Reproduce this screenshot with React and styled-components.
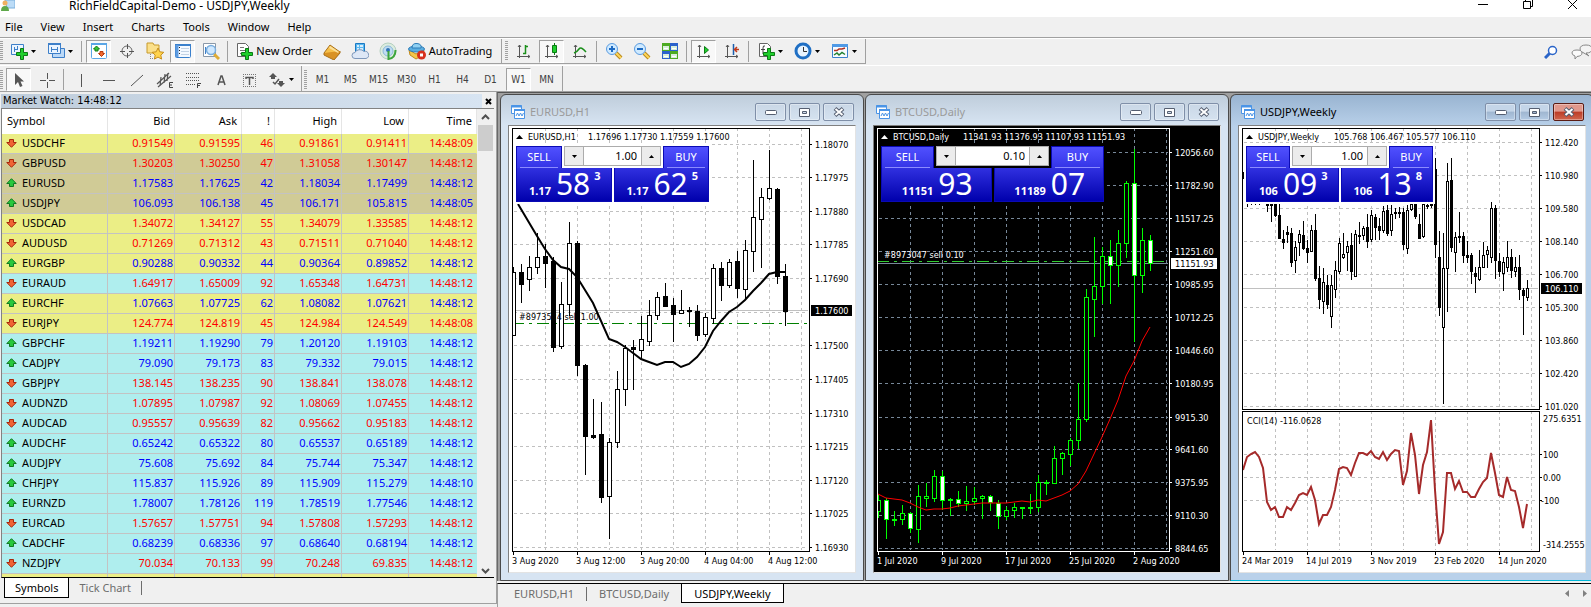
import React from "react";
import styled, { createGlobalStyle, css } from "styled-components";

const UI = '"Noto Sans", "Open Sans", sans-serif';
const CHART = '"DejaVu Sans Condensed", "DejaVu Sans", "Noto Sans", sans-serif';

const GlobalStyle = createGlobalStyle`
  * { box-sizing: border-box; }
  body { margin: 0; background: #f0f0f0; overflow: hidden; }
  button, input { font: inherit; color: inherit; margin: 0; padding: 0; border: 0; background: none; }
  svg { display: block; }
`;

const Shell = styled.div`
  display: flex;
  flex-direction: column;
  height: 100vh;
  background: #f0f0f0;
  color: #000;
  font: 11px/14px ${UI};
`;

/* ---------- title bar and menu ---------- */

const TitleBar = styled.header`
  display: flex;
  align-items: flex-start;
  height: 17px;
  padding-left: 1px;
  background: #fff;
  overflow: hidden;
  flex: none;
`;
const Title = styled.h1`
  flex: 1;
  margin: 0;
  padding-left: 54px;
  font: 12px/12px ${UI};
`;
const CaptionButton = styled.button`
  display: flex;
  justify-content: center;
  width: 45px;
  height: 12px;
  &:last-child { margin-right: -4px; }
`;
const MenuBar = styled.nav`
  display: flex;
  gap: 18px;
  height: 21px;
  padding: 0 5px;
  border-bottom: 1px solid #a0a0a0;
  flex: none;
`;
const MenuItem = styled.button`
  line-height: 20px;
  text-align: left;
`;

/* ---------- toolbars ---------- */

const Toolbar = styled.div`
  display: flex;
  align-items: stretch;
  height: ${(p) => (p.$last ? 26 : 27)}px;
  border-top: 1px solid #fff;
  border-bottom: ${(p) => (p.$last ? 0 : 1)}px solid transparent;
  flex: none;
`;
const ToolGroup = styled.div`
  display: flex;
  align-items: center;
  gap: 3px;
  padding-top: ${(p) => (p.$tight ? 2 : 0)}px;
  padding-right: ${(p) => (p.$tight ? 3 : 4)}px;
  border-right: 1px solid #a0a0a0;
  border-bottom: ${(p) => (p.$tight ? 0 : 1)}px solid #a0a0a0;
`;
const Grip = styled.span`
  width: 3px;
  height: 20px;
  margin-left: ${(p) => (p.$m === undefined ? 3 : p.$m)}px;
  background: repeating-linear-gradient(#a0a0a0 0 1px, #f0f0f0 1px 2px);
`;
const ToolButton = styled.button`
  display: flex;
  align-items: center;
  justify-content: center;
  gap: 3px;
  width: ${(p) => p.$w || 25}px;
  height: 23px;
  white-space: nowrap;
  border: 1px solid transparent;
  ${(p) =>
    p.$on &&
    css`
      background: #f8f8f8;
      border-color: #a0a0a0 #fff #fff #a0a0a0;
    `}
  ${(p) =>
    p.$small &&
    css`
      font: 10px/12px ${CHART};
      color: #404040;
    `}
`;
const ToolSeparator = styled.span`
  width: 1px;
  height: 21px;
  margin: 0 1px;
  background: #a0a0a0;
`;
const ToolbarEnd = styled.div`
  flex: 1;
  display: flex;
  justify-content: flex-end;
  align-items: center;
  gap: 13px;
  overflow: hidden;
`;

/* ---------- market watch ---------- */

const Main = styled.main`
  display: flex;
  flex: 1;
  min-height: 0;
  border-top: 1px solid #a0a0a0;
`;
const WatchPanel = styled.section`
  display: flex;
  flex-direction: column;
  width: 497px;
  margin-bottom: 3px;
  padding: 2px 2px 0 1px;
  border-right: 1px solid #a0a0a0;
  border-bottom: 1px solid #a0a0a0;
  flex: none;
`;
const WatchTitle = styled.div`
  display: flex;
  align-items: center;
  height: 14px;
  flex: none;
`;
const WatchName = styled.h2`
  flex: 1;
  margin: 0;
  padding-left: 2px;
  font: 11px/14px ${CHART};
  background: linear-gradient(90deg, #bfcddb, #d7e4f2);
`;
const CloseButton = styled.button`
  display: flex;
  justify-content: center;
  width: 12px;
`;
const WatchBody = styled.div`
  display: flex;
  flex: 1;
  min-height: 0;
  border: 1px solid #828282;
  border-right: 0;
  border-bottom-color: #000;
`;
const TableClip = styled.div`
  flex: 1;
  overflow: hidden;
  background: #fff;
`;
const Table = styled.table`
  width: 100%;
  table-layout: fixed;
  border-collapse: separate;
  border-spacing: 0;
`;
const HeadCell = styled.th`
  width: ${(p) => p.$w}px;
  height: 25px;
  padding: 0 4px 2px 5px;
  font-weight: 400;
  text-align: ${(p) => (p.$left ? "left" : "right")};
  border-right: 1px solid #e5e5e5;
`;
const Row = styled.tr`
  background: ${(p) => ({ y: "#ebee86", k: "#d0cb96", c: "#afeeee" })[p.$tone]};
  color: ${(p) => (p.$up ? "#0000ff" : "#ff0000")};
`;
const Cell = styled.td`
  height: 20px;
  padding: 0 1px 2px;
  text-align: right;
  line-height: 17px;
  border-right: 1px solid #c3c3c3;
  border-bottom: 1px solid #c3c3c3;
  &:last-child { padding-right: 3px; border-right-color: transparent; }
`;
const SymbolCell = styled(Cell)`
  text-align: left;
  color: #000;
`;
const SymbolName = styled.span`
  display: flex;
  align-items: center;
  gap: 5px;
  padding-left: 3px;
`;
const ScrollBar = styled.div`
  display: flex;
  flex-direction: column;
  align-items: center;
  width: 17px;
  padding: 5px 0 3px;
  background: #f0f0f0;
`;
const ScrollThumb = styled.div`
  width: 15px;
  height: 26px;
  margin: 5px 0 auto;
  background: #cdcdcd;
`;

/* ---------- tab strips ---------- */

const TabStrip = styled.div`
  display: flex;
  align-items: flex-start;
  height: ${(p) => p.$h}px;
  padding-left: ${(p) => p.$pad}px;
  flex: none;
`;
const DocumentTabs = styled(TabStrip)`
  margin-top: 2px;
  border-top: 1px solid #000;
  border-left: 1px solid #a0a0a0;
`;
const Tab = styled.button`
  height: ${(p) => p.$h}px;
  padding: 0 ${(p) => p.$px || 10}px;
  line-height: 17px;
  color: #6d6d6d;
  ${(p) =>
    p.$on &&
    css`
      color: #000;
      background: #fff;
      border: 1px solid #000;
      border-top: 0;
    `}
`;
const TabDivider = styled.span`
  width: 1px;
  height: 14px;
  margin-top: 3px;
  background: #6d6d6d;
`;
const TabArrows = styled.div`
  display: flex;
  gap: 14px;
  margin: 6px 4px 0 auto;
`;

/* ---------- chart windows ---------- */

const Workspace = styled.section`
  display: flex;
  flex-direction: column;
  flex: 1;
  min-width: 0;
`;
const Desktop = styled.div`
  display: flex;
  flex: 1;
  min-height: 0;
  overflow: hidden;
  padding: 1px 0 0 2px;
  background: #a0a0a0;
  border-top: 1px solid #555;
  border-left: 1px solid #696969;
`;
const WindowRow = styled.div`
  display: grid;
  grid-template-columns: repeat(3, minmax(0, 1fr));
  gap: 1px;
  flex: 1;
  margin-right: -3px;
`;
const Window = styled.article`
  display: flex;
  flex-direction: column;
  min-height: 0;
  padding: 0 7px 7px;
  border: 1px solid #4a4a4a;
  border-bottom-color: ${(p) => (p.$active ? "#00b8d8" : "#4a4a4a")};
  border-radius: 6px 6px 0 0;
  background: ${(p) =>
    p.$active
      ? "linear-gradient(#99b4d1 0, #b9d1ea 32px)"
      : "linear-gradient(#bfcddb 0, #d7e4f2 30px)"};
`;
const WindowTitle = styled.div`
  display: flex;
  align-items: center;
  gap: 3px;
  height: 30px;
  padding: 4px 2px 0 3px;
  flex: none;
`;
const WindowName = styled.h2`
  flex: 1;
  margin: 0 0 0 1px;
  font: 11px/16px ${UI};
  color: ${(p) => (p.$active ? "#000" : "#9a9a9a")};
`;
const WindowButton = styled.button`
  display: flex;
  align-items: center;
  justify-content: center;
  width: 31px;
  height: 18px;
  border: 1px solid ${(p) => (p.$close ? "#5a1c14" : "#7f8fa8")};
  border-radius: 2px;
  box-shadow: inset 0 0 0 1px rgba(255, 255, 255, 0.35);
  background: ${(p) =>
    p.$close ? "linear-gradient(#e0988c 0 45%, #bc3c26 50%, #d0664e)" : p.$active ? "linear-gradient(#c4d5e8 0 45%, #9fb6d0 50%, #b4cbe4)" : "linear-gradient(#c9d7e6, #d5e2f0)"};
`;
const ChartBody = styled.div`
  display: flex;
  flex-direction: column;
  flex: 1;
  min-height: 0;
  padding: 2px 0 0 3px;
  border: 1px solid #808080;
  border-right-color: #e3e3e3;
  border-bottom-color: #e3e3e3;
  background: ${(p) => p.$bg};
  color: ${(p) => p.$fg};
`;
const Pane = styled.div`
  display: flex;
  ${(p) => (p.$h ? `height: ${p.$h}px; flex: none; margin-top: 1px;` : "flex: 1; min-height: 0;")}
`;
const Plot = styled.div`
  position: relative;
  flex: 1;
  min-width: 0;
  border: 1px solid currentColor;
  overflow: hidden;
`;
const PlotSvg = styled.svg`
  width: 100%;
  height: 100%;
  text { font: 9px ${CHART}; }
`;
const AxisSvg = styled.svg`
  width: ${(p) => p.$w}px;
  height: 100%;
  flex: none;
  overflow: visible;
  text { font: 9px ${CHART}; }
`;
const TimeAxis = styled.div`
  display: flex;
  height: 20px;
  flex: none;
`;
const TimeLabel = styled.span`
  width: 64px;
  padding-top: 3px;
  font: 9px/12px ${CHART};
  white-space: nowrap;
  flex: none;
  background: linear-gradient(currentColor, currentColor) 1px 0 / 1px 3px no-repeat;
`;

/* ---------- one-click trading ---------- */

const TradePanel = styled.div`
  position: absolute;
  left: 3px;
  top: 17px;
  display: grid;
  grid-template-columns: 1fr 1fr;
  gap: 2px;
  width: ${(p) => p.$w}px;
  height: 56px;
  background: ${(p) => p.$bg};
  outline: 2px solid ${(p) => p.$bg};
`;
const QuoteButton = styled.button`
  display: flex;
  flex-direction: column;
  align-items: ${(p) => (p.$buy ? "flex-end" : "flex-start")};
  color: #fff;
`;
const QuoteTab = styled.span`
  width: ${(p) => p.$w}px;
  height: 22px;
  padding: 0 3px;
  line-height: 20px;
  text-align: center;
  border: 1px solid #0a0ab4;
  border-bottom: 0;
  background: linear-gradient(#5050ff, #3434e6);
  &::after {
    content: "";
    display: block;
    height: 1px;
    background: #8c8cff;
  }
`;
const QuotePrice = styled.span`
  display: flex;
  justify-content: center;
  width: 100%;
  height: 34px;
  border: 1px solid #0a0ab4;
  border-top-width: 0;
  background: linear-gradient(#3030e0, #0000ac);
`;
const Prefix = styled.b`
  padding: 15px 5px 0 2px;
  font-size: 11px;
  line-height: 16px;
`;
const Pips = styled.span`
  font-size: 30px;
  line-height: 32px;
`;
const Fraction = styled.b`
  padding: 2px 0 0 4px;
  font-size: 11px;
  line-height: 12px;
`;
const Spinner = styled.div`
  position: absolute;
  top: 0;
  left: ${(p) => p.$x}px;
  right: ${(p) => p.$x}px;
  display: flex;
  height: 20px;
  border: 1px solid #acacac;
  background: #fff;
  color: #000;
`;
const SpinButton = styled.button`
  display: flex;
  align-items: center;
  justify-content: center;
  width: 19px;
  background: #ececec;
  border: 0 solid #acacac;
  border-right-width: ${(p) => (p.$down ? 1 : 0)}px;
  border-left-width: ${(p) => (p.$down ? 0 : 1)}px;
`;
const Volume = styled.input`
  flex: 1;
  width: 0;
  padding-right: 4px;
  text-align: right;
`;

/* ---------- icons ---------- */

const Svg = ({ s = 18, children }) => (
  <svg width={s} height={s} viewBox="0 0 18 18" fill="none" aria-hidden="true">
    {children}
  </svg>
);
const Plus = () => (
  <path d="M10.500 6.500h3v4h4v3h-4v4h-3v-4h-4v-3h4z" fill="#1fcf2c" stroke="#0b7a14" />
);
const Caret = () => (
  <svg width="5" height="3" viewBox="0 0 5 3" aria-hidden="true">
    <path d="M0 0h5L2.500 3z" fill="#000" />
  </svg>
);
const Axes = ({ children }) => (
  <Svg>
    <path d="M4.500 3v13M2 14.500h13M3 5l1.500-2L6 5M13 13l2 1.500L13 16" stroke="#555" />
    {children}
  </Svg>
);
const Lens = ({ children }) => (
  <Svg>
    <path d="M11 11l5 5" stroke="#b98a1e" strokeWidth="4" />
    <path d="M11 11l5 5" stroke="#ffd65a" strokeWidth="2" />
    <circle cx="7" cy="7" r="5.500" fill="#cfeaff" stroke="#5a9be0" />
    <path d={children} stroke="#1d6bc4" strokeWidth="2" />
  </Svg>
);

const I = {
  newChart: (
    <Svg>
      <path d="M1.500 2.500h12v10h-12z" fill="#eaf4ff" stroke="#3d7fc9" />
      <path d="M4.500 5v5M7.500 4v4M4 7.500h3" stroke="#3d7fc9" />
      <Plus />
    </Svg>
  ),
  profiles: (
    <Svg>
      <path d="M5.500 6.500h12v9h-12z" fill="#bcd9f7" stroke="#3d7fc9" />
      <path d="M1.500 1.500h12v10h-12z" fill="#eaf4ff" stroke="#3d7fc9" />
      <path d="M1 2h13" stroke="#3d7fc9" strokeWidth="2" />
      <path d="M4 7.500h7M4.500 5v5M10.500 5v5" stroke="#3d7fc9" />
    </Svg>
  ),
  watch: (
    <Svg>
      <rect x="1.500" y="1.500" width="15" height="15" rx="1" fill="#fff" stroke="#5aa6e6" />
      <path d="M1 2h16" stroke="#5aa6e6" strokeWidth="2" />
      <path d="M6.500 4l3 3H8v2H5V7H3.500z" fill="#35c435" stroke="#157a15" />
      <path d="M11.500 14.500l-3-3H10v-2h3v2h1.500z" fill="#f06a30" stroke="#b8380c" />
    </Svg>
  ),
  data: (
    <Svg>
      <circle cx="9" cy="9" r="5" stroke="#666" />
      <path d="M9.500 2v5M9.500 11v5M2 9.500h5M11 9.500h5" stroke="#555" />
    </Svg>
  ),
  navigator: (
    <Svg>
      <path d="M1 1h6l1 2h5v8H1z" fill="#fbe08a" stroke="#c79a2c" />
      <path d="M4.500 12v5M4 16.500h5" stroke="#888" strokeDasharray="1 1" />
      <path d="M12 6l1.800 3.800 4 .5-3 2.800.8 4-3.600-2-3.600 2 .8-4-3-2.800 4-.5z" fill="#ffd34d" stroke="#c78f1c" />
    </Svg>
  ),
  terminal: (
    <Svg>
      <rect x="1.500" y="2.500" width="15" height="13" rx="1" fill="#f4f9ff" stroke="#3a80cc" />
      <path d="M1 3h16" stroke="#3a80cc" strokeWidth="2" />
      <path d="M3 3v12" stroke="#5d9be0" strokeWidth="3" />
      <path d="M7 6.500h8M7 9.500h8M7 12.500h8" stroke="#c2d2e4" />
      <path d="M5.500 5v9" stroke="#222" strokeDasharray="1 2" />
    </Svg>
  ),
  tester: (
    <Svg>
      <path d="M1.500 1.500h12v13h-12z" fill="#fff" stroke="#8a98a8" />
      <path d="M3.500 12V5M11.500 4v3" stroke="#3d7fc9" />
      <path d="M12 12l5 5" stroke="#e0ac35" strokeWidth="3" />
      <circle cx="9" cy="8" r="4.500" fill="#cfe8ff" stroke="#7aaede" strokeWidth="1.500" />
    </Svg>
  ),
  order: (
    <Svg>
      <path d="M2.500 1.500h8l3 3v10h-11z" fill="#fff" stroke="#666" />
      <path d="M5 5.500h4M5 8.500h5M5 11.500h3" stroke="#777" />
      <Plus />
    </Svg>
  ),
  book: (
    <Svg>
      <path d="M1 11l6-8 10 7-5 6z" fill="#f6c04a" stroke="#a8701a" />
      <path d="M1 11v2l10 5 6-7v-2" fill="#d99224" stroke="#a8701a" />
      <path d="M7 4l9 6-1 1-9-5z" fill="#fbe09a" />
    </Svg>
  ),
  cloud: (
    <Svg>
      <path d="M4.500 1.500h9v9h-9z" fill="#5cb8f0" stroke="#1a7ac4" />
      <path d="M6 4h2M6 7h2M9 4h3M9 7h3" stroke="#fff" strokeWidth="1.500" />
      <path d="M4 16.500a3 3 0 010-6 5 4 0 019-1 3.500 3.500 0 012 7z" fill="#dde7f6" stroke="#7e97ba" />
    </Svg>
  ),
  signal: (
    <Svg>
      <circle cx="9" cy="9" r="8" fill="#dcecdf" stroke="#b4d0c0" />
      <circle cx="9" cy="9" r="5" fill="#c0dcf2" stroke="#8ab8d8" />
      <circle cx="9" cy="8" r="2" fill="#2f74b8" />
      <path d="M9.500 9v8q7-1 7-9" stroke="#3da53d" strokeWidth="2" />
    </Svg>
  ),
  auto: (
    <Svg>
      <path d="M1 8l7 4 8-4-1 5-7 4-6-4z" fill="#f5c64a" stroke="#c28a1a" />
      <ellipse cx="8.500" cy="7" rx="8" ry="3" fill="#5aaee0" stroke="#2d7cb8" />
      <path d="M4 6q0-5 5-4.500T13 6z" fill="#8fd0f2" stroke="#2d7cb8" />
      <circle cx="13.500" cy="13" r="4.500" fill="#d8301c" />
      <path d="M12 11.500h3v3h-3z" fill="#fff" />
    </Svg>
  ),
  bars: (
    <Axes>
      <path d="M10.500 3v9M10 4.500h3M8 11.500h3" stroke="#1a8f1a" strokeWidth="1.500" />
    </Axes>
  ),
  candles: (
    <Axes>
      <path d="M11.500 1v12" stroke="#0b7a14" />
      <path d="M9.500 3.500h4v7h-4z" fill="#1fcf2c" stroke="#0b7a14" />
    </Axes>
  ),
  line: (
    <Axes>
      <path d="M3 11q3-1 5-4t7 3" stroke="#1a8f1a" strokeWidth="1.500" />
    </Axes>
  ),
  zoomIn: <Lens>M4 7h6M7 4v6</Lens>,
  zoomOut: <Lens>M4 7h6</Lens>,
  tile: (
    <Svg>
      <path d="M1 1h8v8H1zM9 9h8v8H9z" fill="#4cab22" />
      <path d="M9 1h8v8H9zM1 9h8v8H1z" fill="#2a62cc" />
      <path d="M2 4h6v4H2zM10 4h6v4h-6zM2 12h6v4H2zM10 12h6v4h-6z" fill="#d8efdc" />
      <path d="M3 6.500h4M11 6.500h4M3 14.500h4M11 14.500h4" stroke="#fff" />
    </Svg>
  ),
  scroll: (
    <Axes>
      <path d="M9.500 4.500v7l4-3.500z" fill="#1fcf2c" stroke="#0b7a14" />
    </Axes>
  ),
  shift: (
    <Axes>
      <path d="M10.500 2v11" stroke="#1b5fae" strokeWidth="1.500" />
      <path d="M16 7.500h-4M14 5l-2.500 2.500L14 10" stroke="#c0391b" strokeWidth="1.500" />
    </Axes>
  ),
  indicator: (
    <Svg>
      <path d="M2.500 1.500h8l3 3v10h-11z" fill="#fff" stroke="#666" />
      <path d="M8 4q-2-1-2 2v6M4 7.500h4" stroke="#444" />
      <Plus />
    </Svg>
  ),
  clock: (
    <Svg>
      <circle cx="9" cy="9" r="7" fill="#e8f4ff" stroke="#1f6fc4" strokeWidth="3" />
      <path d="M9.500 5v4.500h3.500" stroke="#333" />
    </Svg>
  ),
  template: (
    <Svg>
      <path d="M1.500 2.500h15v13h-15z" fill="#f7fbff" stroke="#3a80cc" />
      <path d="M1 3.500h16" stroke="#4f9ae6" strokeWidth="3" />
      <path d="M3 8.500h3l2-1.500h3l3-1" stroke="#b03020" strokeWidth="1.500" />
      <path d="M3 13l3-2 2 2 3-2.500 3 2" stroke="#208030" strokeWidth="1.500" />
    </Svg>
  ),
  cursor: (
    <Svg>
      <path d="M5 2v12l3-3 2 5 2.500-1-2-4.500H14z" fill="#555" />
    </Svg>
  ),
  cross: (
    <Svg>
      <path d="M9.500 2v6M9.500 11v6M2 9.500h6M11 9.500h6" stroke="#555" />
    </Svg>
  ),
  vline: (
    <Svg>
      <path d="M9.500 3v13" stroke="#555" />
    </Svg>
  ),
  hline: (
    <Svg>
      <path d="M3 9.500h12" stroke="#555" />
    </Svg>
  ),
  trend: (
    <Svg>
      <path d="M3 15L15 4" stroke="#555" />
    </Svg>
  ),
  channel: (
    <Svg>
      <path d="M1 13L13 2M2 16L15 5M5 6l-1 9M9 3L8 12M12 2l-1 8" stroke="#555" strokeWidth="1.200" />
      <path d="M17 11.500h-3.500v5H17M13.500 14H16" stroke="#444" />
    </Svg>
  ),
  fibo: (
    <Svg>
      <path d="M2 2.500h14M2 6.500h14M2 9.500h14M2 13.500h9" stroke="#555" strokeDasharray="1 1" />
      <path d="M17 12.500h-3.500V17M13.500 14.500H16" stroke="#444" />
    </Svg>
  ),
  text: (
    <Svg>
      <path d="M6 14l3-9h1l3 9M7 11h5" stroke="#555" strokeWidth="1.500" />
    </Svg>
  ),
  label: (
    <Svg>
      <path d="M3 3.500h13M3 15.500h13M3.500 3v13M15.500 3v13" stroke="#777" strokeDasharray="1 1" />
      <path d="M6 8V6.500h7V8M9.500 6v8" stroke="#555" strokeWidth="1.500" />
    </Svg>
  ),
  arrows: (
    <Svg>
      <path d="M5 2l4 4H7v2H3V6H1zM13 16l-4-4h2v-2h4v2h2z" fill="#555" />
      <path d="M5 11l2 2 4-5" stroke="#555" strokeWidth="1.500" />
    </Svg>
  ),
  chartWin: (
    <svg width="15" height="14" viewBox="0 0 15 14" fill="none" aria-hidden="true">
      <path d="M.5.5h10v8H.5z" fill="#fff" stroke="#4a94e6" />
      <path d="M0 1.500h11" stroke="#4a94e6" strokeWidth="2" />
      <path d="M3.500 4.500h10v9h-10z" fill="#fff" stroke="#4a94e6" />
      <path d="M3 5h11" stroke="#4a94e6" strokeWidth="2" />
      <path d="M5 11l1.500-3L8 11l1.500-3 1.500 3 1.500-3" stroke="#4a94e6" />
    </svg>
  ),
};

const Arrow = ({ up }) => (
  <svg width="11" height="10" viewBox="0 0 11 10" aria-hidden="true">
    <path
      d="M5.500.7l4.700 4.800H7.500v3h-4v-3H.8z"
      transform={up ? undefined : "rotate(180 5.500 5)"}
      fill={up ? "#27c83c" : "#f06434"}
      stroke={up ? "#107a20" : "#a8280c"}
    />
  </svg>
);
const Chevron = ({ down }) => (
  <svg width="9" height="6" viewBox="0 0 9 6" fill="none" aria-hidden="true">
    <path d={down ? "M1 1l3.500 3.500L8 1" : "M1 5l3.500-3.500L8 5"} stroke="#505050" strokeWidth="2" />
  </svg>
);

/* ---------- data ---------- */

const quotes = `USDCHF 0.91549 0.91595 46 0.91861 0.91411 09 d y
GBPUSD 1.30203 1.30250 47 1.31058 1.30147 12 d k
EURUSD 1.17583 1.17625 42 1.18034 1.17499 12 u k
USDJPY 106.093 106.138 45 106.171 105.815 05 u k
USDCAD 1.34072 1.34127 55 1.34079 1.33585 12 d y
AUDUSD 0.71269 0.71312 43 0.71511 0.71040 12 d y
EURGBP 0.90288 0.90332 44 0.90364 0.89852 12 u y
EURAUD 1.64917 1.65009 92 1.65348 1.64731 12 d c
EURCHF 1.07663 1.07725 62 1.08082 1.07621 12 u y
EURJPY 124.774 124.819 45 124.984 124.549 08 d y
GBPCHF 1.19211 1.19290 79 1.20120 1.19103 12 u c
CADJPY 79.090 79.173 83 79.332 79.015 12 u c
GBPJPY 138.145 138.235 90 138.841 138.078 12 d c
AUDNZD 1.07895 1.07987 92 1.08069 1.07455 12 d c
AUDCAD 0.95557 0.95639 82 0.95662 0.95183 12 d c
AUDCHF 0.65242 0.65322 80 0.65537 0.65189 12 u c
AUDJPY 75.608 75.692 84 75.744 75.347 12 u c
CHFJPY 115.837 115.926 89 115.909 115.279 10 u c
EURNZD 1.78007 1.78126 119 1.78519 1.77546 12 u c
EURCAD 1.57657 1.57751 94 1.57808 1.57293 12 d c
CADCHF 0.68239 0.68336 97 0.68640 0.68194 12 u c
NZDJPY 70.034 70.133 99 70.248 69.835 12 d c`
  .split("\n")
  .map((l) => l.split(" "));

/* candles: wick top, body top, body bottom, wick bottom, falling */
const parse = (s) => s.trim().split(/\s+/).map((c) => c.split(",").map(Number));

const eur = parse(`139,144,207,207,0 136,144,156,174,1 128,139,151,162,0 105,129,139,145,0 116,128,135,159,1
129,133,219,223,1 154,176,218,220,0 94,115,176,187,0 113,115,237,247,1 236,237,308,346,1 271,307,309,310,1
274,306,369,374,1 310,314,368,410,0 243,261,314,319,0 217,220,261,277,0 212,219,221,261,1 188,211,222,230,0
172,187,213,217,0 164,169,187,191,0 155,168,178,178,1 170,177,186,213,1 162,182,185,185,0 179,182,183,198,1
177,183,207,212,1 185,189,206,208,0 136,140,190,195,0 134,140,157,172,1 131,134,157,159,0 123,133,160,169,1
112,122,161,171,0 32,89,123,143,0 60,69,91,139,0 22,60,70,71,0 60,61,148,155,1 136,148,183,197,1`);

const btc = parse(`367,372,383,389,0 370,372,391,410,1 383,391,392,397,0 377,385,391,396,0 384,385,400,404,1
357,368,401,414,0 355,368,370,378,0 342,348,370,373,0 343,348,372,381,1 370,371,372,387,0 363,371,375,378,1
358,373,375,382,0 359,370,373,376,0 367,368,370,390,0 367,368,374,382,1 372,375,388,400,1 379,382,388,391,0
375,379,382,389,0 379,379,380,390,0 366,379,380,385,0 347,354,379,383,0 352,354,355,366,0 318,330,355,355,0
324,325,330,346,0 310,312,326,337,0 255,291,312,320,0 161,169,291,293,0 109,158,171,208,0 119,128,158,175,0
112,128,137,175,1 102,115,137,158,0 53,55,115,129,0 21,55,147,213,1 100,112,147,164,0 107,112,135,142,1`);

const jpy = parse(`44,48,50,50,1 60,62,75,78,1 60,62,75,76,1 60,62,75,76,1 60,62,75,76,1 60,62,70,72,1 75,76,77,83,1
75,76,77,93,0 75,76,87,88,1 75,87,110,110,1 102,111,114,120,1 98,104,106,114,1 100,105,134,138,1 113,119,132,144,0
102,106,114,127,0 93,107,120,121,1 112,120,124,134,1 97,102,123,123,0 86,102,150,152,1 138,150,171,180,1
140,154,173,185,0 147,157,176,180,1 147,157,188,199,0 133,142,161,169,0 110,115,143,145,0 105,126,129,130,0
113,118,124,142,0 105,117,143,151,1 102,106,148,148,0 94,107,108,115,1 98,100,107,111,0 86,99,113,119,1
82,87,111,113,0 86,89,99,111,1 90,98,102,111,1 78,83,102,104,0 77,82,105,107,1 77,86,102,107,0 80,84,85,90,0
79,84,85,89,1 80,84,116,121,1 77,82,120,125,0 75,76,81,82,0 75,76,88,90,1 86,96,110,110,1 75,76,108,109,0
75,77,78,80,1 75,76,77,79,1 30,41,116,129,1 103,129,179,187,1 105,140,199,275,0 35,53,140,183,0 30,52,119,123,1
104,109,124,143,0 84,108,109,114,1 104,108,127,134,1 113,127,129,134,1 125,127,143,155,1 139,145,148,164,1
122,139,151,152,0 114,127,139,139,0 118,122,126,139,0 74,80,129,134,0 77,80,132,150,1 125,133,143,148,1
129,134,145,162,0 113,129,139,143,0 121,129,142,149,1 129,139,143,148,0 127,139,161,171,1 160,162,167,206,1
152,160,169,172,0`);

const eurMA =
  "6,76 25,108 33,121 41,132 49,139 57,141 65,149 81,175 97,211 105,214 113,219 121,225 129,231 137,234 145,237 153,234 161,234 169,239 177,236 185,229 193,219 201,203 209,193 217,184 225,179 233,172 241,163 249,155 257,146 265,144 274,144";
const series = (step, ys) => ys.map((y, i) => `${i * step + 1},${y}`).join(" ");
const btcMA = series(8, [366, 370, 371, 372, 375, 379, 382, 381, 381, 380, 378, 377, 376, 375, 375, 375, 375, 374, 373, 374, 372, 373, 370, 367, 363, 356, 343, 326, 309, 291, 272, 248, 233, 213, 199]);
const cci = series(4, [
  342, 329, 326, 324, 329, 340, 374, 382, 379, 389, 389, 379, 382, 375, 367, 365, 367, 359, 372, 396, 387, 387, 379, 362,
  341, 339, 340, 347, 335, 325, 325, 327, 323, 329, 331, 324, 332, 326, 322, 323, 357, 343, 305, 327, 366, 337, 324, 292,
  362, 416, 404, 345, 345, 361, 353, 364, 364, 369, 369, 361, 354, 350, 325, 345, 367, 369, 349, 362, 363, 379, 400, 376,
]);

const light = { bg: "#fff", fg: "#000", grid: "#c0c0c0", price: "#c0c0c0", order: "#008000", up: "#fff", down: "#000", edge: "#000" };
const dark = { bg: "#000", fg: "#fff", grid: "#778899", price: "#778899", order: "#32cd32", up: "#000", down: "#fff", edge: "#00ff00" };

const charts = [
  {
    name: "EURUSD,H1", theme: light, head: "1.17696 1.17730 1.17559 1.17600", headX: 76, axisW: 45,
    rows: [16, 49, 83, 116, 150, 184, 217, 251, 285, 318, 352, 385, 419],
    prices: ["1.18070", "1.17975", "1.17880", "1.17785", "1.17690", "", "1.17500", "1.17405", "1.17310", "1.17215", "1.17120", "1.17025", "1.16930"],
    last: [182, "1.17600"], order: [195, "#8973524 sell 1.00"], candles: eur, step: 8, ma: eurMA, maColor: "#000", maWidth: 2,
    times: ["3 Aug 2020", "3 Aug 12:00", "3 Aug 20:00", "4 Aug 04:00", "4 Aug 12:00"],
    panel: { w: 193, tab: 46, vol: "1.00", sell: ["1.17", "58", "3"], buy: ["1.17", "62", "5"] },
  },
  {
    name: "BTCUSD,Daily", theme: dark, head: "11341.93 11376.93 11107.93 11151.93", headX: 86, axisW: 50,
    rows: [24, 57, 90, 123, 156, 189, 222, 255, 289, 321, 354, 387, 420],
    prices: ["12056.60", "11782.90", "11517.25", "11251.60", "10985.95", "10712.25", "10446.60", "10180.95", "9915.30", "9641.60", "9375.95", "9110.30", "8844.65"],
    last: [135, "11151.93"], order: [133, "#8973047 sell 0.10"], candles: btc, step: 8, ma: btcMA, maColor: "#ff0000", maWidth: 1,
    times: ["1 Jul 2020", "9 Jul 2020", "17 Jul 2020", "25 Jul 2020", "2 Aug 2020"],
    panel: { w: 223, tab: 53, vol: "0.10", sell: ["11151", "93"], buy: ["11189", "07"] },
  },
  {
    name: "USDJPY,Weekly", theme: light, active: true, head: "105.768 106.467 105.577 106.110", headX: 92, axisW: 45,
    rows: [14, 47, 80, 113, 146, 179, 212, 245, 278],
    prices: ["112.420", "110.980", "109.580", "108.140", "106.700", "105.300", "103.860", "102.420", "101.020"],
    last: [160, "106.110"], candles: jpy, step: 4,
    times: ["24 Mar 2019", "14 Jul 2019", "3 Nov 2019", "23 Feb 2020", "14 Jun 2020"],
    panel: { w: 187, tab: 44, vol: "1.00", sell: ["106", "09", "3"], buy: ["106", "13", "8"] },
    cci: true,
  },
];

/* ---------- chart parts ---------- */

const Grid = ({ rows, color, bottom = "100%" }) => (
  <g stroke={color} strokeDasharray="3 3">
    {Array.from({ length: 9 }, (_, i) => (
      <line key={i} x1={33.5 + 32 * i} x2={33.5 + 32 * i} y1="0" y2={bottom} />
    ))}
    {rows.map((y) => (
      <line key={y} x1="2" x2="100%" y1={y + 0.5} y2={y + 0.5} />
    ))}
  </g>
);

const Candles = ({ data, step, theme }) => {
  const half = step === 8 ? 2 : 1;
  return data.map(([hi, top, bottom, lo, falling], i) => {
    const x = i * step + 1.5;
    return (
      <g key={i} stroke={theme.edge}>
        <line x1={x} x2={x} y1={hi} y2={lo + 1} />
        <rect x={x - half} y={top + 0.5} width={half * 2} height={bottom - top} fill={falling ? theme.down : theme.up} />
      </g>
    );
  });
};

const Quote = ({ buy, tab, parts }) => (
  <QuoteButton $buy={buy}>
    <QuoteTab $w={tab}>{buy ? "BUY" : "SELL"}</QuoteTab>
    <QuotePrice>
      <Prefix>{parts[0]}</Prefix>
      <Pips>{parts[1]}</Pips>
      {parts[2] && <Fraction>{parts[2]}</Fraction>}
    </QuotePrice>
  </QuoteButton>
);

const OneClick = ({ panel, theme, name }) => (
  <TradePanel $w={panel.w} $bg={theme.bg}>
    <Quote tab={panel.tab} parts={panel.sell} />
    <Quote buy tab={panel.tab} parts={panel.buy} />
    <Spinner $x={panel.tab + 2}>
      <SpinButton $down aria-label="Decrease volume">
        <Caret />
      </SpinButton>
      <Volume aria-label={`${name} volume`} defaultValue={panel.vol} />
      <SpinButton aria-label="Increase volume">
        <svg width="5" height="3" viewBox="0 0 5 3"><path d="M0 3h5L2.500 0z" /></svg>
      </SpinButton>
    </Spinner>
  </TradePanel>
);

const ChartWindow = ({ c }) => {
  const t = c.theme;
  return (
    <Window $active={c.active}>
      <WindowTitle>
        {I.chartWin}
        <WindowName $active={c.active}>{c.name}</WindowName>
        <WindowButton $active={c.active} aria-label="Minimize">
          <svg width="12" height="6"><rect x=".5" y="1.500" width="11" height="4" rx="1" fill="#fff" stroke="#555e70" /></svg>
        </WindowButton>
        <WindowButton $active={c.active} aria-label="Maximize">
          <svg width="11" height="9"><path d="M.5.5h10v8H.5zM3.500 3.500v2h4v-2z" fill="#fff" fillRule="evenodd" stroke="#555e70" /></svg>
        </WindowButton>
        <WindowButton $active={c.active} $close={c.active} aria-label="Close">
          <svg width="12" height="10" fill="none">
            <path d="M2 1.500l8 7M10 1.500l-8 7" stroke="#555e70" strokeWidth="4" />
            <path d="M2.500 2l7 6M9.500 2l-7 6" stroke="#fff" strokeWidth="2" />
          </svg>
        </WindowButton>
      </WindowTitle>
      <ChartBody $bg={t.bg} $fg={t.fg}>
        <Pane>
          <Plot>
            <PlotSvg>
              <g transform="translate(-1 -1)">
                <Grid rows={c.rows} color={t.grid} />
                <line x1="0" x2="100%" y1={c.last[0] + 0.5} y2={c.last[0] + 0.5} stroke={t.price} />
                {c.order && <line x1="0" x2="110%" y1={c.order[0] + 0.5} y2={c.order[0] + 0.5} stroke={t.order} strokeDasharray="12 5 3 5" />}
                <Candles data={c.candles} step={c.step} theme={t} />
                {c.ma && <polyline points={c.ma} fill="none" stroke={c.maColor} strokeWidth={c.maWidth} />}
                <g fill={t.fg}>
                  <path d="M4 11h7L7.500 7z" />
                  <text x="16" y="12">{c.name}</text>
                  <text x={c.headX} y="12">{c.head}</text>
                  {c.order && <text x="7" y={c.order[0] - 3}>{c.order[1]}</text>}
                </g>
              </g>
            </PlotSvg>
            <OneClick panel={c.panel} theme={t} name={c.name} />
          </Plot>
          <AxisSvg $w={c.axisW}>
            <g fill={t.fg}>
              {c.rows.map((y, i) => c.prices[i] && (
                <g key={y}>
                  <rect x="0" y={y} width="2" height="1" />
                  <text x="5" y={y + 4}>{c.prices[i]}</text>
                </g>
              ))}
              <rect x="1" y={c.last[0] - 5} width={c.axisW - 4} height="11" />
              <text x="5" y={c.last[0] + 4} fill={t.bg}>{c.last[1]}</text>
            </g>
          </AxisSvg>
        </Pane>
        {c.cci && (
          <Pane $h={141}>
            <Plot>
              <PlotSvg>
                <g transform="translate(-1 -1)">
                  <Grid rows={[43, 66, 89]} color={t.grid} />
                </g>
                <g transform="translate(-1 -284)">
                  <polyline points={cci} fill="none" stroke="#a52a2a" strokeWidth="2" />
                  <text x="5" y="296">CCI(14) -116.0628</text>
                </g>
              </PlotSvg>
            </Plot>
            <AxisSvg $w={c.axisW}>
              <text x="3" y="11">275.6351</text>
              <text x="3" y="47">100</text>
              <text x="3" y="70">0.00</text>
              <text x="1" y="93">-100</text>
              <text x="3" y="137">-314.2555</text>
              <path d="M0 43.500h2M0 66.500h2M0 89.500h2" stroke="#000" />
            </AxisSvg>
          </Pane>
        )}
        <TimeAxis>
          {c.times.map((x) => <TimeLabel key={x}>{x}</TimeLabel>)}
        </TimeAxis>
      </ChartBody>
    </Window>
  );
};

const Tool = ({ icon, label, on, drop, small, w, children }) => (
  <ToolButton aria-label={label} $on={on} $small={small} $w={drop ? 34 : w}>
    {icon}
    {children}
    {drop && <Caret />}
  </ToolButton>
);

export default function App() {
  return (
    <Shell>
      <GlobalStyle />
      <TitleBar>
        <svg width="14" height="12" viewBox="0 0 14 12" aria-hidden="true">
          <path d="M4 0h10v8H6z" fill="#bcdcf7" stroke="#7db0dc" />
          <path d="M0 11q0-5 4-5t4 5z" fill="#5fa84a" />
          <circle cx="4" cy="3" r="2.500" fill="#f0b060" />
        </svg>
        <Title>RichFieldCapital-Demo - USDJPY,Weekly</Title>
        <CaptionButton aria-label="Minimize"><svg width="10" height="10"><path d="M0 4.500h10" stroke="#000" /></svg></CaptionButton>
        <CaptionButton aria-label="Restore"><svg width="10" height="10" fill="none"><path d="M.5 1.500h7v7h-7zM2.500 1V0M9.500 0v6.500H8" stroke="#000" /></svg></CaptionButton>
        <CaptionButton aria-label="Close"><svg width="10" height="10"><path d="M0 0l9 9M9 0L0 9" stroke="#000" /></svg></CaptionButton>
      </TitleBar>
      <MenuBar>
        {["File", "View", "Insert", "Charts", "Tools", "Window", "Help"].map((m) => <MenuItem key={m}>{m}</MenuItem>)}
      </MenuBar>
      <Toolbar>
        <ToolGroup>
          <Grip $m={0} />
          <Tool drop icon={I.newChart} label="New chart" />
          <Tool drop icon={I.profiles} label="Profiles" />
          <ToolSeparator />
          <Tool on icon={I.watch} label="Market Watch" />
          <Tool icon={I.data} label="Data Window" />
          <Tool icon={I.navigator} label="Navigator" />
          <Tool on icon={I.terminal} label="Terminal" />
          <Tool icon={I.tester} label="Strategy Tester" />
          <ToolSeparator />
          <Tool w={84} icon={I.order}>New Order</Tool>
          <Tool icon={I.book} label="MetaEditor" />
          <Tool icon={I.cloud} label="Cloud" />
          <Tool icon={I.signal} label="Signals" />
          <Tool w={94} icon={I.auto}>AutoTrading</Tool>
        </ToolGroup>
        <ToolGroup>
          <Grip />
          <Tool icon={I.bars} label="Bar chart" />
          <Tool on icon={I.candles} label="Candlesticks" />
          <Tool icon={I.line} label="Line chart" />
          <ToolSeparator />
          <Tool icon={I.zoomIn} label="Zoom in" />
          <Tool icon={I.zoomOut} label="Zoom out" />
          <Tool icon={I.tile} label="Tile windows" />
          <ToolSeparator />
          <Tool on icon={I.scroll} label="Auto scroll" />
          <Tool icon={I.shift} label="Chart shift" />
          <ToolSeparator />
          <Tool drop icon={I.indicator} label="Indicators" />
          <Tool drop icon={I.clock} label="Periods" />
          <Tool drop icon={I.template} label="Templates" />
        </ToolGroup>
        <ToolbarEnd>
          <svg width="14" height="14" viewBox="0 0 14 14" fill="none" aria-label="Search">
            <path d="M1 13l5-5" stroke="#2a64c8" strokeWidth="3" />
            <circle cx="8.500" cy="5.500" r="4" fill="#fff" stroke="#2a64c8" strokeWidth="1.500" />
          </svg>
          <svg width="20" height="16" viewBox="0 0 20 16" aria-label="Chat">
            <path d="M9 5q0-4 6-4t6 4-6 4l3 3-6-3.500Q9 8 9 5z" fill="#f4f4f4" stroke="#888" />
            <path d="M1 9q0-3 5-3t5 3-5 3.500L4 15v-3q-3-1-3-3z" fill="#fafafa" stroke="#888" />
          </svg>
        </ToolbarEnd>
      </Toolbar>
      <Toolbar $last>
        <ToolGroup $tight>
          <Grip $m={0} />
          <Tool on icon={I.cursor} label="Cursor" />
          <Tool icon={I.cross} label="Crosshair" />
          <ToolSeparator />
          <Tool icon={I.vline} label="Vertical line" />
          <Tool icon={I.hline} label="Horizontal line" />
          <Tool icon={I.trend} label="Trendline" />
          <Tool icon={I.channel} label="Channel" />
          <Tool icon={I.fibo} label="Fibonacci" />
          <Tool icon={I.text} label="Text" />
          <Tool icon={I.label} label="Text label" />
          <Tool drop icon={I.arrows} label="Arrows" />
        </ToolGroup>
        <ToolGroup $tight>
          <Grip $m={2} />
          {["M1", "M5", "M15", "M30", "H1", "H4", "D1", "W1", "MN"].map((x) => (
            <Tool key={x} small on={x === "W1"}>{x}</Tool>
          ))}
        </ToolGroup>
      </Toolbar>
      <Main>
        <WatchPanel>
          <WatchTitle>
            <WatchName>Market Watch: 14:48:12</WatchName>
            <CloseButton aria-label="Close Market Watch">
              <svg width="7" height="7"><path d="M1 1l5 5M6 1L1 6" stroke="#000" strokeWidth="2" /></svg>
            </CloseButton>
          </WatchTitle>
          <WatchBody>
            <TableClip>
              <Table>
                <thead>
                  <tr>
                    {[["Symbol", 106], ["Bid", 67], ["Ask", 67], ["!", 33], ["High", 67], ["Low", 67], ["Time", 68]].map(([h, w], i) => (
                      <HeadCell key={h} $w={w} $left={!i}>{h}</HeadCell>
                    ))}
                  </tr>
                </thead>
                <tbody>
                  {quotes.map(([s, bid, ask, sp, hi, lo, sec, dir, tone]) => (
                    <Row key={s} $up={dir === "u"} $tone={tone}>
                      <SymbolCell><SymbolName><Arrow up={dir === "u"} />{s}</SymbolName></SymbolCell>
                      <Cell>{bid}</Cell>
                      <Cell>{ask}</Cell>
                      <Cell>{sp}</Cell>
                      <Cell>{hi}</Cell>
                      <Cell>{lo}</Cell>
                      <Cell>14:48:{sec}</Cell>
                    </Row>
                  ))}
                  <Row $tone="y" aria-hidden="true">
                    {[0, 1, 2, 3, 4, 5, 6].map((i) => <Cell key={i} />)}
                  </Row>
                </tbody>
              </Table>
            </TableClip>
            <ScrollBar>
              <Chevron />
              <ScrollThumb />
              <Chevron down />
            </ScrollBar>
          </WatchBody>
          <TabStrip $h={25} $pad={3}>
            <Tab $on $h={20}>Symbols</Tab>
            <Tab $h={19}>Tick Chart</Tab>
            <TabDivider />
          </TabStrip>
        </WatchPanel>
        <Workspace>
          <Desktop>
            <WindowRow>
              {charts.map((c) => <ChartWindow key={c.name} c={c} />)}
            </WindowRow>
          </Desktop>
          <DocumentTabs $h={24} $pad={4}>
            <Tab $h={18} $px={12}>EURUSD,H1</Tab>
            <TabDivider />
            <Tab $h={18} $px={12}>BTCUSD,Daily</Tab>
            <Tab $on $h={19} $px={12}>USDJPY,Weekly</Tab>
            <TabArrows>
              <svg width="4" height="7" aria-hidden="true"><path d="M4 0v7L0 3.500z" fill="#808080" /></svg>
              <svg width="4" height="7" aria-hidden="true"><path d="M0 0v7l4-3.500z" fill="#808080" /></svg>
            </TabArrows>
          </DocumentTabs>
        </Workspace>
      </Main>
    </Shell>
  );
}
